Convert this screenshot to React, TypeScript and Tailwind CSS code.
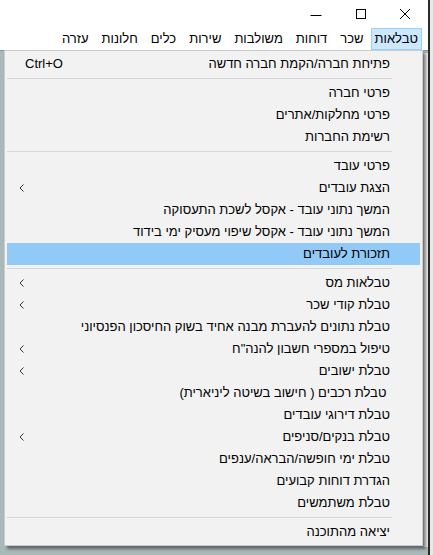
import React from "react";

type Item =
  | { type: "sep" }
  | { type: "item"; label: string; arrow?: boolean; shortcut?: string; active?: boolean };

const items: Item[] = [
  { type: "item", label: "פתיחת חברה/הקמת חברה חדשה", shortcut: "Ctrl+O" },
  { type: "sep" },
  { type: "item", label: "פרטי חברה" },
  { type: "item", label: "פרטי מחלקות/אתרים" },
  { type: "item", label: "רשימת החברות" },
  { type: "sep" },
  { type: "item", label: "פרטי עובד" },
  { type: "item", label: "הצגת עובדים", arrow: true },
  { type: "item", label: "המשך נתוני עובד - אקסל לשכת התעסוקה" },
  { type: "item", label: "המשך נתוני עובד - אקסל שיפוי מעסיק ימי בידוד" },
  { type: "item", label: "תזכורת לעובדים", active: true },
  { type: "sep" },
  { type: "item", label: "טבלאות מס", arrow: true },
  { type: "item", label: "טבלת קודי שכר", arrow: true },
  { type: "item", label: "טבלת נתונים להעברת מבנה אחיד בשוק החיסכון הפנסיוני" },
  { type: "item", label: "טיפול במספרי חשבון להנה\"ח", arrow: true },
  { type: "item", label: "טבלת ישובים", arrow: true },
  { type: "item", label: " טבלת רכבים ( חישוב בשיטה ליניארית)" },
  { type: "item", label: "טבלת דירוגי עובדים" },
  { type: "item", label: "טבלת בנקים/סניפים", arrow: true },
  { type: "item", label: "טבלת ימי חופשה/הבראה/ענפים" },
  { type: "item", label: "הגדרת דוחות קבועים" },
  { type: "item", label: "טבלת משתמשים" },
  { type: "sep" },
  { type: "item", label: "יציאה מהתוכנה" },
];

const menuBar = ["טבלאות", "שכר", "דוחות", "משולבות", "שירות", "כלים", "חלונות", "עזרה"];

function Chevron() {
  return (
    <svg width="5" height="8" viewBox="0 0 5 8" className="block">
      <polyline points="4.5,0.5 1,4 4.5,7.5" fill="none" stroke="#333" strokeWidth="1" />
    </svg>
  );
}

export default function App() {
  return (
    <div
      className="w-[433px] h-[555px] flex overflow-hidden bg-white text-[#000]"
      style={{ fontFamily: '"Liberation Sans", "DejaVu Sans", sans-serif' }}
    >
      <div className="w-[428px] h-full flex flex-col relative">
        {/* title bar */}
        <div className="h-[28px] flex justify-end items-center bg-white pr-[17px] gap-[32px]">
          <svg width="12" height="12" viewBox="0 0 12 12">
            <line x1="0.5" y1="7.5" x2="11.5" y2="7.5" stroke="#000" strokeWidth="1" />
          </svg>
          <svg width="12" height="12" viewBox="0 0 12 12" className="ml-[1px]">
            <rect x="1.5" y="1.5" width="9" height="9" fill="none" stroke="#000" strokeWidth="1" />
          </svg>
          <svg width="12" height="12" viewBox="0 0 12 12">
            <path d="M1 1 L11 11 M11 1 L1 11" stroke="#000" strokeWidth="1" />
          </svg>
        </div>
        {/* menu bar */}
        <div dir="rtl" className="h-[22px] flex items-stretch bg-white pr-[6px] text-[13px]">
          {menuBar.map((m, i) => (
            <div
              key={m}
              className={
                i === 0
                  ? "px-[3px] flex items-center bg-[#cce8ff] border border-[#99d1ff]"
                  : "pr-[6px] pl-[5px] flex items-center border border-transparent"
              }
            >
              {m}
            </div>
          ))}
        </div>
        {/* client area */}
        <div className="flex-1 bg-[#a9b9b9] border-t border-[#8a9a9a] flex justify-end">
          <div className="w-[5px] mt-[2px] mb-[8px] bg-[#f0f0f0] border-l border-[#d0d0d0]" />
        </div>
        {/* dropdown */}
        <div
          dir="rtl"
          className="absolute left-[4px] top-[50px] w-[419px] bg-[#f2f2f2] border border-[#cccccc] py-[2px] px-[2px] text-[13px] shadow-[3px_3px_3px_rgba(0,0,0,0.45)]"
        >
          {items.map((it, i) =>
            it.type === "sep" ? (
              <div key={i} className="h-[7px] flex items-center pr-[28px]">
                <div className="h-px w-full bg-[#d7d7d7]" />
              </div>
            ) : (
              <div
                key={i}
                className={
                  "h-[22px] flex items-center justify-between pr-[30px] whitespace-pre " +
                  (it.active ? "bg-[#91c9f7]" : "")
                }
              >
                <span>{it.label}</span>
                {it.arrow ? (
                  <span className="pl-[12px]">
                    <Chevron />
                  </span>
                ) : it.shortcut ? (
                  <span dir="ltr" className="pl-[18px]">
                    {it.shortcut}
                  </span>
                ) : null}
              </div>
            )
          )}
        </div>
      </div>
      <div className="w-[2px] h-full bg-[#2a2a2a]" />
      <div className="w-[3px] h-full bg-[#e8e8e8]" />
    </div>
  );
}
